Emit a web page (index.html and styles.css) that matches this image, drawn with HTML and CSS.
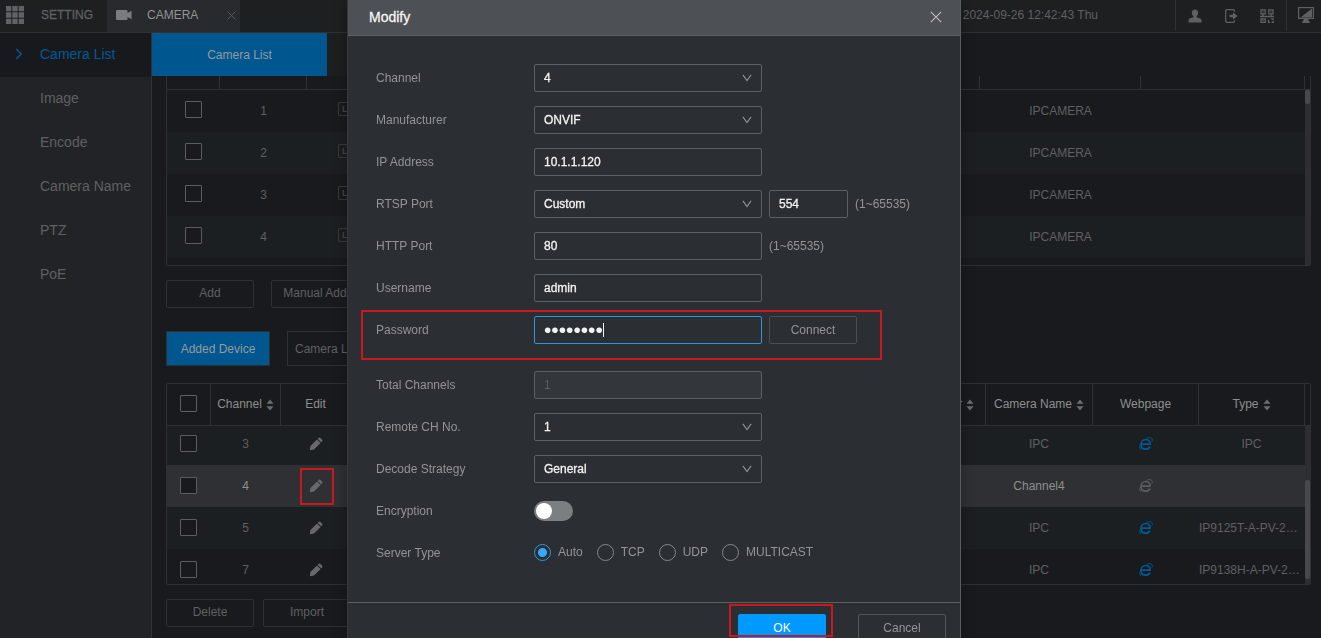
FILE: index.html
```html
<!DOCTYPE html>
<html lang="en">
<head>
<meta charset="utf-8">
<title>Camera List</title>
<link rel="stylesheet" href="styles.css">
</head>
<body>
<svg class="defs" aria-hidden="true">
  <symbol id="pencil" viewBox="0 0 14 14"><path d="M.8 13.200l.6-4.200L8 2.500l3.600 3.600L5 12.600zM8.700 1.900l1.100-1.100q.7-.6 1.400 0l2 2q.6.7 0 1.400l-1.100 1.100z"/></symbol>
  <symbol id="sort" viewBox="0 0 8 12"><path d="M4 .5l3.500 4.200H.5zM4 11.500L.5 7.300h7z"/></symbol>
  <symbol id="down" viewBox="0 0 10 8"><path d="M.9 .9L5 6.600 9.100.9" fill="none" stroke="currentColor" stroke-width="1.100"/></symbol>
  <symbol id="cross" viewBox="0 0 12 12"><path d="M.8.8l10.400 10.400M11.200.8L.8 11.200" fill="none" stroke="currentColor" stroke-width="1.200"/></symbol>
  <symbol id="ie" viewBox="0 0 14 14"><path d="M2.500 7.200h8.600c.2-3-1.500-4.700-4.200-4.700C4.200 2.500 2 4.600 2 7.500c0 2.900 1.900 4.700 4.700 4.700 2.100 0 3.500-.8 4.200-2.600" fill="none" stroke="currentColor" stroke-width="1.700"/><path d="M2.200 12.700C.6 12.400.3 10.300 1.300 8M7.500 1.300C10 .3 12.900.3 13.200 2.300c.1.900 0 1.600-.4 2.400" fill="none" stroke="currentColor" stroke-width=".9"/></symbol>
</svg>

<header class="topbar">
  <svg class="grid-icon" viewBox="0 0 18 18"><path d="M0 0h5.300v5.300H0zM6.300 0h5.400v5.300H6.300zM12.700 0H18v5.300h-5.300zM0 6.300h5.300v5.400H0zM6.300 6.300h5.400v5.400H6.300zM12.700 6.300H18v5.400h-5.300zM0 12.700h5.300V18H0zM6.300 12.700h5.400V18H6.300zM12.700 12.700H18V18h-5.300z"/></svg>
  <a class="setting" href="#">SETTING</a>
  <div class="app-tab">
    <svg class="cam-icon" viewBox="0 0 16 10"><path d="M1 0h9.500q1 0 1 1v2L15.500.8v8.400L11.500 7v2q0 1-1 1H1Q0 10 0 9V1q0-1 1-1z"/></svg>
    <span>CAMERA</span>
    <button class="tab-close" aria-label="Close tab"><svg><use href="#cross"/></svg></button>
  </div>
  <time class="clock">2024-09-26 12:42:43 Thu</time>
  <div class="tools">
    <button aria-label="User"><svg viewBox="0 0 14 14"><path d="M7 .5c2 0 3.200 1.400 3.200 3.200 0 1.500-.7 2.800-1.600 3.500v1l3.700 1.300q1.200.6 1.200 2V13.500H.5v-2q0-1.400 1.200-2l3.700-1.300v-1c-.9-.7-1.600-2-1.600-3.500C3.800 1.900 5 .5 7 .5z"/></svg></button>
    <button aria-label="Log out"><svg viewBox="0 0 14 14"><path d="M10.500 2.800V2q0-1.300-1.300-1.300H3Q1.700.7 1.700 2v10q0 1.300 1.300 1.300h6.200q1.300 0 1.300-1.300v-.8" fill="none" stroke="currentColor" stroke-width="1.200"/><path d="M5.500 5.800h3.500V3.200L13.500 7l-4.500 3.800V8.200H5.500z"/></svg></button>
    <button aria-label="QR code"><svg viewBox="0 0 14 14"><g fill="none" stroke="currentColor" stroke-width="1.300"><path d="M1 .8h4.200v4H1zM8.800.8H13v4H8.800zM1 10h4.200v3.300H1zM0 7.500h14M3 5v2.500M11 5v2.500M8.500 10.700V13.300H10M11 9.800h2.200v1.500M13.200 12v1.500H11.500M2.600 2.800h1M10.400 2.800h1M2.600 11.700h1"/></g></svg></button>
  </div>
  <button class="screen" aria-label="Display"><svg viewBox="0 0 16 17"><rect x=".6" y=".6" width="14.800" height="10.800" fill="none" stroke="currentColor" stroke-width="1.200"/><path d="M14 1.600v8.800H2.500zM5.800 12h4.400l.8 2.500h.8V16H4.200v-1.500H5z"/></svg></button>
</header>

<div class="layout">
  <nav class="sidebar">
    <a class="current" href="#"><svg class="arrow" viewBox="0 0 8 12"><path d="M1.200 1l5 5-5 5" fill="none" stroke="currentColor" stroke-width="1.600"/></svg>Camera List</a>
    <a href="#">Image</a>
    <a href="#">Encode</a>
    <a href="#">Camera Name</a>
    <a href="#">PTZ</a>
    <a href="#">PoE</a>
  </nav>

  <main class="content">
    <div class="tabs"><button class="tab">Camera List</button><div class="tab-rest"></div></div>

    <div class="panels">
      <section class="panel found">
        <table class="found-table">
          <colgroup><col class="w53"><col class="w87"><col><col class="w161"><col class="w164"></colgroup>
          <thead><tr><th></th><th></th><th></th><th></th><th></th></tr></thead>
          <tbody>
            <tr><td class="pick"><input type="checkbox" aria-label="Select 1"></td><td>1</td><td class="live-cell"><span class="live">LIVE</span></td><td>IPCAMERA</td><td></td></tr>
            <tr><td class="pick"><input type="checkbox" aria-label="Select 2"></td><td>2</td><td class="live-cell"><span class="live">LIVE</span></td><td>IPCAMERA</td><td></td></tr>
            <tr><td class="pick"><input type="checkbox" aria-label="Select 3"></td><td>3</td><td class="live-cell"><span class="live">LIVE</span></td><td>IPCAMERA</td><td></td></tr>
            <tr><td class="pick"><input type="checkbox" aria-label="Select 4"></td><td>4</td><td class="live-cell"><span class="live">LIVE</span></td><td>IPCAMERA</td><td></td></tr>
          </tbody>
        </table>
        <div class="gutter"><div class="gutter-head"></div><div class="track"><div class="thumb"></div></div></div>
      </section>

      <div class="actions wide"><button class="btn">Add</button><button class="btn">Manual Add</button></div>

      <div class="subtabs"><button class="subtab on">Added Device</button><button class="subtab">Camera List</button></div>

      <section class="panel added">
        <table class="added-table">
          <colgroup><col class="w44"><col class="w70"><col class="w70"><col><col class="w105"><col class="w107"><col class="w106"><col class="w106"></colgroup>
          <thead>
            <tr>
              <th><input type="checkbox" aria-label="Select all"></th>
              <th>Channel<svg class="sort"><use href="#sort"/></svg></th>
              <th>Edit</th><th></th>
              <th>Manufacturer<svg class="sort"><use href="#sort"/></svg></th>
              <th>Camera Name<svg class="sort"><use href="#sort"/></svg></th>
              <th>Webpage</th>
              <th>Type<svg class="sort"><use href="#sort"/></svg></th>
            </tr>
          </thead>
          <tbody>
            <tr class="partial"><td><input type="checkbox" aria-label="Select channel 3"></td><td>3</td><td><button class="edit" aria-label="Edit"><svg><use href="#pencil"/></svg></button></td><td></td><td></td><td>IPC</td><td><a class="web" href="#" aria-label="Webpage"><svg><use href="#ie"/></svg></a></td><td>IPC</td></tr>
            <tr class="hover"><td><input type="checkbox" aria-label="Select channel 4"></td><td>4</td><td><button class="edit marked" aria-label="Edit"><svg><use href="#pencil"/></svg></button></td><td></td><td></td><td>Channel4</td><td><a class="web off" href="#" aria-label="Webpage"><svg><use href="#ie"/></svg></a></td><td></td></tr>
            <tr class="tint"><td><input type="checkbox" aria-label="Select channel 5"></td><td>5</td><td><button class="edit" aria-label="Edit"><svg><use href="#pencil"/></svg></button></td><td></td><td></td><td>IPC</td><td><a class="web" href="#" aria-label="Webpage"><svg><use href="#ie"/></svg></a></td><td class="long">IP9125T-A-PV-2…</td></tr>
            <tr><td><input type="checkbox" aria-label="Select channel 7"></td><td>7</td><td><button class="edit" aria-label="Edit"><svg><use href="#pencil"/></svg></button></td><td></td><td></td><td>IPC</td><td><a class="web" href="#" aria-label="Webpage"><svg><use href="#ie"/></svg></a></td><td class="long">IP9138H-A-PV-2…</td></tr>
          </tbody>
        </table>
        <div class="gutter"><div class="gutter-head"></div><div class="track low"><div class="thumb"></div></div></div>
      </section>

      <div class="actions"><button class="btn">Delete</button><button class="btn">Import</button></div>
    </div>
  </main>
</div>

<div class="overlay">
  <form class="dialog" role="dialog" aria-labelledby="dialog-title">
    <div class="dialog-head"><h1 id="dialog-title">Modify</h1><button type="button" class="close" aria-label="Close"><svg><use href="#cross"/></svg></button></div>
    <div class="dialog-body">
      <div class="row"><label for="channel">Channel</label><div class="select"><select id="channel"><option>4</option></select><svg><use href="#down"/></svg></div></div>
      <div class="row"><label for="maker">Manufacturer</label><div class="select"><select id="maker"><option>ONVIF</option></select><svg><use href="#down"/></svg></div></div>
      <div class="row"><label for="ip">IP Address</label><input class="field" id="ip" type="text" value="10.1.1.120"></div>
      <div class="row"><label for="rtsp">RTSP Port</label><div class="select"><select id="rtsp"><option>Custom</option></select><svg><use href="#down"/></svg></div><input class="field short" type="text" value="554" aria-label="RTSP port number"><span>(1~65535)</span></div>
      <div class="row"><label for="http">HTTP Port</label><input class="field" id="http" type="text" value="80"><span>(1~65535)</span></div>
      <div class="row"><label for="user">Username</label><input class="field" id="user" type="text" value="admin"></div>
      <div class="row password"><label for="pass">Password</label><div class="pass-wrap"><input class="field active" id="pass" type="password" value="password"><i class="caret"></i></div><button type="button" class="btn connect">Connect</button></div>
      <div class="row"><label for="total">Total Channels</label><input class="field" id="total" type="text" value="1" disabled></div>
      <div class="row"><label for="remote">Remote CH No.</label><div class="select"><select id="remote"><option>1</option></select><svg><use href="#down"/></svg></div></div>
      <div class="row"><label for="decode">Decode Strategy</label><div class="select"><select id="decode"><option>General</option></select><svg><use href="#down"/></svg></div></div>
      <div class="row"><label for="encrypt">Encryption</label><input class="switch" id="encrypt" type="checkbox"></div>
      <div class="row" role="radiogroup" aria-labelledby="server-type"><span class="label" id="server-type">Server Type</span>
        <div class="radios">
          <label><input type="radio" name="server" checked>Auto</label>
          <label><input type="radio" name="server">TCP</label>
          <label><input type="radio" name="server">UDP</label>
          <label><input type="radio" name="server">MULTICAST</label>
        </div>
      </div>
    </div>
    <div class="dialog-foot"><div class="ok-wrap"><button type="button" class="btn ok">OK</button></div><button type="button" class="btn cancel">Cancel</button></div>
  </form>
</div>
</body>
</html>
```
FILE: styles.css
```css
* { box-sizing: border-box; }
body {
  margin: 0;
  height: 100vh;
  overflow: hidden;
  display: flex;
  flex-direction: column;
  background: #191a1d;
  color: #5f6062;
  font: 12px/16px "Liberation Sans", Arial, sans-serif;
}
button, input, select { font: inherit; color: inherit; margin: 0; }
button { background: none; border: 0; padding: 0; }
a { color: inherit; text-decoration: none; }
svg { display: block; fill: currentColor; flex: none; }
.defs { position: absolute; width: 0; height: 0; }

/* Top bar */
.topbar {
  display: flex;
  align-items: center;
  flex: none;
  height: 33px;
  padding-left: 6px;
  padding-bottom: 2px;
  background: #1e1f21;
  border-bottom: 1px solid #303133;
}
.grid-icon { width: 18px; height: 18px; color: #606164; }
.setting { margin-left: 17px; width: 66px; -webkit-text-stroke: 0.3px; }
.app-tab {
  display: flex;
  align-items: center;
  align-self: stretch;
  width: 133px;
  padding: 0 4px 2px 9px;
  margin-bottom: -2px;
  background: #292a2d;
  color: #929394;
}
.cam-icon { width: 16px; height: 10px; margin-right: 15px; color: #7b7c7d; }
.tab-close { margin-left: auto; color: #5b5c5e; }
.tab-close svg { width: 9px; height: 9px; }
.clock { margin-left: auto; margin-right: 77px; }
.tools, .screen {
  display: flex;
  align-items: center;
  align-self: stretch;
  border-left: 1px solid #303133;
  margin-bottom: -1px;
}
.tools { gap: 22px; padding: 0 12px; }
.tools svg { width: 14px; height: 14px; }
.screen { width: 35px; padding-left: 11px; }
.screen svg { width: 16px; height: 17px; }

/* Frame */
.layout { display: flex; flex: 1; min-height: 0; }
.sidebar {
  flex: none;
  width: 152px;
  background: #222326;
  border-right: 1px solid #303133;
  font-size: 14px;
}
.sidebar a {
  display: flex;
  align-items: center;
  height: 44px;
  padding: 0 0 2px 40px;
}
.sidebar .current { padding-left: 15px; background: #18191d; color: #005a97; }
.arrow { width: 8px; height: 12px; margin-right: 17px; }
.content { flex: 1; min-width: 0; }
.tabs { display: flex; height: 43px; }
.tab { width: 175px; background: #00568f; color: #979a9c; }
.tab-rest { width: 175px; background: #1d1e20; }
.panels { padding: 0 10px 0 14px; }

/* Tables */
.panel {
  display: flex;
  align-items: flex-start;
  border: 1px solid #2f3032;
  border-radius: 0 0 2px 2px;
  overflow: hidden;
}
.found { height: 190px; border-top: 0; }
.added { height: 202px; margin-top: 17px; border-radius: 2px; }
table { flex: 1; min-width: 0; table-layout: fixed; border-collapse: separate; border-spacing: 0; }
th, td { padding: 0; text-align: center; font-weight: 400; }
th { border-right: 1px solid #2f3032; border-bottom: 1px solid #2f3032; color: #8d8e8f; white-space: nowrap; }
td { height: 42px; }
.found-table th { height: 14px; }
.found-table tr:nth-child(even) td { background: #1c1f21; }
.found-table .pick { padding-bottom: 4px; }
.added-table th { height: 42px; padding-bottom: 2px; }
.added-table td { padding: 0 1px 1px 0; }
.added-table .partial td { height: 39px; padding-bottom: 4px; background: #1c1f21; }
.tint td { background: #1c1f21; }
.hover td { background: #2f3033; color: #8d8e8f; }
.w53 { width: 53px; }
.w87 { width: 87px; }
.w161 { width: 161px; }
.w164 { width: 164px; }
.w44 { width: 44px; }
.w70 { width: 70px; }
.w105 { width: 105px; }
.w107 { width: 107px; }
.w106 { width: 106px; }
.sort { display: inline-block; width: 8px; height: 12px; margin-left: 4px; vertical-align: -3px; color: #6b6c6d; }
.added-table .long { text-align: left; white-space: nowrap; }
td input, th input {
  appearance: none;
  display: block;
  width: 17px;
  height: 17px;
  margin: 0 auto;
  border: 1px solid #5c5d5f;
  border-radius: 1px;
  background: #191a1d;
}
.live-cell { padding: 0 0 6px 31px; text-align: left; }
.live {
  display: inline-block;
  border: 1px solid #37383a;
  border-radius: 1px;
  padding: 0 3px;
  font-size: 9px;
  font-weight: 700;
  line-height: 12px;
  color: #434446;
}
.edit { position: relative; display: block; margin: 0 auto; color: #67686a; }
.edit svg { width: 14px; height: 14px; }
.marked::after {
  content: "";
  position: absolute;
  inset: -11px -11px -12px -9px;
  border: 2px solid #c9191d;
}
.web { display: block; width: 14px; margin: 0 auto; color: #005a97; }
.web svg { width: 14px; height: 14px; }
.off { color: #5b5c5e; }
.gutter { display: flex; flex-direction: column; align-self: stretch; width: 5px; }
.gutter-head { height: 14px; border-bottom: 1px solid #2f3032; }
.added .gutter-head { height: 42px; }
.track { flex: 1; background: #2c2e2f; }
.thumb { height: 14px; border-radius: 2px; background: #48494b; }
.low .thumb { height: 99px; margin-top: 54px; }

/* Buttons */
.actions { display: flex; gap: 9px; margin-top: 14px; }
.wide { gap: 17px; }
.btn {
  width: 88px;
  height: 28px;
  border: 1px solid #2f3032;
  border-radius: 2px;
  padding-bottom: 2px;
}
.subtabs { display: flex; gap: 17px; margin-top: 23px; }
.subtab { height: 35px; width: 104px; border: 1px solid #2f3032; padding: 0 7px; text-align: left; }
.on { background: #00568f; color: #979a9c; text-align: center; }

/* Dialog */
.overlay {
  position: fixed;
  inset: 0;
  display: flex;
  justify-content: center;
  align-items: flex-start;
  padding-right: 13px;
  overflow: hidden;
}
.dialog {
  width: 614px;
  background: #2b2e33;
  border: solid #5a5c5f;
  border-width: 0 1px;
  border-left-color: #38393c;
  box-shadow: 0 0 12px rgba(0, 0, 0, 0.3);
  color: #929497;
}
.dialog-head {
  display: flex;
  align-items: center;
  justify-content: space-between;
  height: 36px;
  padding: 0 18px 2px 21px;
  background: #4d5054;
  border-bottom: 1px solid #5f6265;
}
.dialog-head h1 { margin: 0; font-size: 14px; font-weight: 400; color: #f4f4f4; -webkit-text-stroke: 0.3px; }
.close { color: #b9bbbd; }
.close svg { width: 12px; height: 12px; }
.dialog-body { display: flex; flex-direction: column; gap: 14px; padding: 28px 28px 35px; }
.row { position: relative; display: flex; align-items: center; gap: 7px; height: 28px; }
.row > label, .row > .label { width: 151px; }
.field, select {
  display: block;
  width: 228px;
  height: 28px;
  padding: 0 9px 1px;
  border: 1px solid #5d6063;
  border-radius: 2px;
  background: transparent;
  color: #f2f2f2;
  outline: 0;
  -webkit-text-stroke: 0.3px;
}
select { appearance: none; }
.select { position: relative; }
.select svg { position: absolute; right: 10px; top: 10px; width: 10px; height: 8px; pointer-events: none; }
.short { width: 79px; }
.field:disabled { background: #33373b; color: #5d6063; -webkit-text-stroke: 0; }
.pass-wrap { position: relative; }
.active { border-color: #2f97df; font-size: 21px; padding-bottom: 0; -webkit-text-stroke: 0; }
.caret { position: absolute; left: 69px; top: 7px; width: 1px; height: 14px; background: #f2f2f2; }
.connect { border-color: #4b4e52; padding: 0; }
.password { margin-bottom: 13px; }
.password::after {
  content: "";
  position: absolute;
  inset: -6px 50px -16px -15px;
  border: 2px solid #c9191d;
  pointer-events: none;
}
.switch {
  appearance: none;
  display: flex;
  align-items: center;
  width: 39px;
  height: 20px;
  padding: 0 2px;
  border-radius: 10px;
  background: #7b7f81;
}
.switch::before { content: ""; width: 16px; height: 16px; border-radius: 50%; background: #fff; }
.radios { display: flex; gap: 14px; padding-bottom: 2px; }
.radios label { display: flex; align-items: center; gap: 7px; }
.radios input {
  appearance: none;
  width: 17px;
  height: 17px;
  border: 1px solid #85888b;
  border-radius: 50%;
}
.radios input:checked {
  border-color: #2f97df;
  background: radial-gradient(circle, #36a9ff 4px, transparent 5px);
}
.dialog-foot {
  display: flex;
  justify-content: flex-end;
  gap: 32px;
  padding: 11px 14px 14px;
  border-top: 1px solid #5d6063;
}
.ok-wrap { position: relative; }
.ok-wrap::after {
  content: "";
  position: absolute;
  inset: -10px -7px 5px -9px;
  border: 2px solid #c9191d;
  pointer-events: none;
}
.ok { background: #0099ff; border-color: #0099ff; color: #fff; display: block; padding: 0; }
.cancel { border-color: #55585b; padding: 0; }
```
